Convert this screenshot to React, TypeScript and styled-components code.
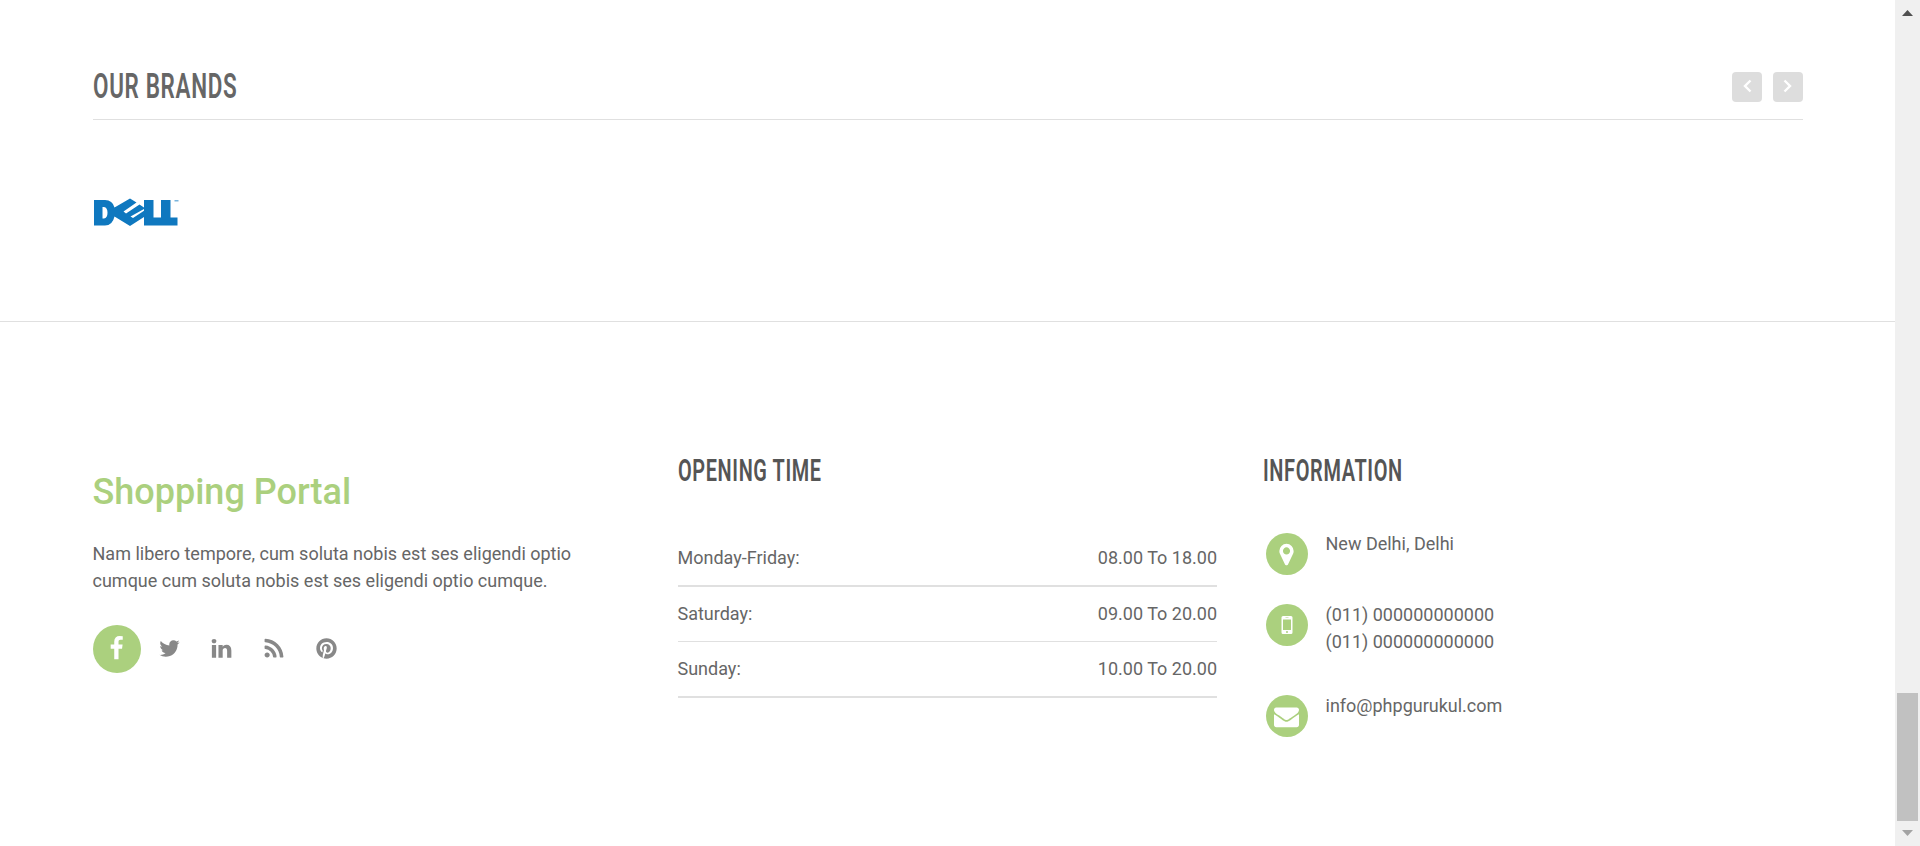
import React from 'react';
import styled, { createGlobalStyle } from 'styled-components';
import { FaPinterest } from 'react-icons/fa';

const GREEN = '#abd07e';
const LINE = '#e0e0e0';

const GlobalStyle = createGlobalStyle`
  * { box-sizing: border-box; }
  html, body { margin: 0; padding: 0; background: #fff; overflow: hidden; }
  body { font: 18px/27px Roboto, sans-serif; color: #666; }
  h2, h3, h4, p, ul { margin: 0; padding: 0; font-weight: 400; }
  ul { list-style: none; }
`;

const Window = styled.div`
  display: flex;
  width: 1920px;
  height: 846px;
`;

const Page = styled.main`
  flex: 1;
  min-width: 0;
`;

const Brands = styled.section`
  height: 322px;
  padding: 72px 92px 0 92.5px;
  border-bottom: 1px solid ${LINE};
`;

const BrandsHeader = styled.header`
  display: flex;
  justify-content: space-between;
  height: 48px;
  border-bottom: 1px solid ${LINE};
`;

const Condensed = styled.h3<{ $size: number; $scale: number; $color: string }>`
  width: max-content;
  height: 30px;
  font-size: ${(p) => p.$size}px;
  line-height: 30px;
  font-weight: 600;
  letter-spacing: 1px;
  color: ${(p) => p.$color};
  text-transform: uppercase;
  white-space: nowrap;
  transform: scaleX(${(p) => p.$scale});
  transform-origin: left center;
`;

const Pager = styled.div`
  display: flex;
  gap: 11px;
`;

const PagerButton = styled.button`
  display: flex;
  justify-content: center;
  width: 30px;
  height: 30px;
  padding: 7px 0 0;
  border: 0;
  border-radius: 4px;
  background: #ddd;
`;

const BrandLogo = styled.svg`
  display: block;
  width: 88px;
  height: 30px;
  margin: 77px 0 0;
`;

const Footer = styled.footer`
  display: grid;
  grid-template-columns: 540px 539.5px 540px;
  column-gap: 45px;
  padding: 133px 0 0 92.5px;
`;

const Column = styled.div<{ $shift?: number }>`
  margin-left: ${(p) => p.$shift ?? 0}px;
`;

const Logo = styled.h2`
  padding-top: 17px;
  font-size: 36px;
  line-height: 40px;
  font-weight: 500;
  color: ${GREEN};
`;

const About = styled.p`
  margin-top: 28px;
  white-space: nowrap;
`;

const Socials = styled.ul`
  display: flex;
  gap: 4.5px;
  margin-top: 31px;
`;

const Social = styled.li<{ $active?: boolean }>`
  display: flex;
  align-items: center;
  justify-content: center;
  width: 48px;
  height: 48px;
  padding-bottom: 1px;
  border-radius: 50%;
  color: ${(p) => (p.$active ? '#fff' : '#888')};
  background: ${(p) => (p.$active ? GREEN : 'transparent')};
`;

const Hours = styled.ul`
  margin-top: 46px;
`;

const HoursRow = styled.li<{ $height: number; $border: number }>`
  display: flex;
  align-items: center;
  justify-content: space-between;
  height: ${(p) => p.$height}px;
  padding-bottom: 2px;
  border-bottom: ${(p) => p.$border}px solid ${LINE};
`;

const Contacts = styled.ul`
  margin-top: 48px;
`;

const Contact = styled.li<{ $height: number }>`
  display: flex;
  gap: 18px;
  height: ${(p) => p.$height}px;
  padding-left: 3px;
`;

const Badge = styled.span`
  display: flex;
  align-items: center;
  justify-content: center;
  width: 42px;
  height: 42px;
  border-radius: 50%;
  background: ${GREEN};
  color: #fff;
`;

const ContactText = styled.div`
  margin-top: -3px;
`;

const Scrollbar = styled.aside`
  display: flex;
  flex-direction: column;
  align-items: center;
  width: 25px;
  height: 846px;
  padding: 10px 0;
  background: #f0f0f0;
`;

const ScrollThumb = styled.div`
  width: 21px;
  height: 128px;
  margin: 677px 0 9px;
  background: #c1c1c1;
`;

const paths = {
  facebook:
    'M1343 12v264h-157q-86 0-116 36t-30 108v189h293l-39 296h-254v759h-306v-759h-255v-296h255v-218q0-186 104-288.5t277-102.5q147 0 228 12z',
  twitter:
    'M1684 408q-67 98-162 167 1 14 1 42 0 130-38 259.5t-115.5 248.5-184.5 210.5-258 146-323 54.5q-271 0-496-145 35 4 78 4 225 0 401-138-105-2-188-64.5t-114-159.5q33 5 61 5 43 0 85-11-112-23-185.5-111.5t-73.5-205.5v-4q68 38 146 41-66-44-105-115t-39-154q0-88 44-163 121 149 294.5 238.5t371.5 99.5q-8-38-8-74 0-134 94.5-228.5t228.5-94.5q140 0 236 102 109-21 205-78-37 115-142 178 93-10 186-50z',
  linkedin:
    'M477 625v991h-330v-991h330zm21-306q1 73-50.5 122t-135.5 49h-2q-82 0-132-49t-50-122q0-74 51.5-122.5t134.5-48.5 133 48.5 51 122.5zm1166 729v568h-329v-530q0-105-40.5-164.5t-126.5-59.5q-63 0-105.5 34.5t-63.5 85.5q-11 30-11 81v553h-329q2-399 2-647t-1-296l-1-48h329v144h-2q20-32 41-56t56.5-52 87-43.5 114.5-15.5q171 0 275 113.5t104 332.5z',
  rss:
    'M576 1344q0 80-56 136t-136 56-136-56-56-136 56-136 136-56 136 56 56 136zm512 123q2 28-17 48-18 21-47 21h-135q-25 0-43-16.5t-20-41.5q-22-229-184.5-391.5t-391.5-184.5q-25-2-41.5-20t-16.5-43v-135q0-29 21-47 17-17 43-17h5q160 13 306 80.5t259 181.5q114 113 181.5 259t80.5 306zm512 2q2 27-18 47-18 20-46 20h-143q-26 0-44.5-17.5t-19.5-42.5q-12-215-101-408.5t-231.5-336-336-231.5-408.5-102q-25-1-42.5-19.5t-17.5-43.5v-143q0-28 20-46 18-18 44-18h3q262 13 501.5 120t425.5 294q187 186 294 425.5t120 501.5z',
  marker:
    'M1152 640q0-106-75-181t-181-75-181 75-75 181 75 181 181 75 181-75 75-181zm256 0q0 109-33 179l-364 774q-16 33-47.5 52t-67.5 19-67.5-19-46.5-52l-365-774q-33-70-33-179 0-212 150-362t362-150 362 150 150 362z',
  envelope:
    'M1792 710v794q0 66-47 113t-113 47h-1472q-66 0-113-47t-47-113v-794q44 49 101 87 362 246 497 345 57 42 92.5 65.5t94.5 48 110 24.5h2q51 0 110-24.5t94.5-48 92.5-65.5q170-123 498-345 57-39 100-87zm0-294q0 79-49 151t-122 123q-376 261-468 325-10 7-42.5 31t-54 38.5-52 32.5-57.5 27-50 9h-2q-23 0-50-9t-57.5-27-52-32.5-54-38.5-42.5-31q-91-64-262-182.5t-205-142.5q-62-42-117-115.5t-55-136.5q0-78 41.5-130t118.5-52h1472q65 0 112.5 47t47.5 113z',
};

const Icon = ({ name, size }: { name: keyof typeof paths; size: number }) => (
  <svg width={size} height={size} viewBox="0 0 1792 1792" fill="currentColor">
    <path d={paths[name]} />
  </svg>
);

const Chevron = ({ d }: { d: string }) => (
  <svg width="12" height="14" viewBox="0 0 12 14" fill="none" stroke="#fff" strokeWidth="2.4">
    <path d={d} />
  </svg>
);

const hours = [
  { day: 'Monday-Friday:', time: '08.00 To 18.00', height: 56, border: 2 },
  { day: 'Saturday:', time: '09.00 To 20.00', height: 55, border: 1 },
  { day: 'Sunday:', time: '10.00 To 20.00', height: 56, border: 2 },
];

export default function App() {
  return (
    <Window>
      <GlobalStyle />
      <Page>
        <Brands>
          <BrandsHeader>
            <Condensed $size={35} $scale={0.642} $color="#666">Our Brands</Condensed>
            <Pager>
              <PagerButton aria-label="Previous"><Chevron d="M9.500 1.500L4 7L9.500 12.500" /></PagerButton>
              <PagerButton aria-label="Next"><Chevron d="M2.500 1.500L8 7L2.500 12.500" /></PagerButton>
            </Pager>
          </BrandsHeader>
          <BrandLogo viewBox="0 0 88 30" fill="#0f78bf" role="img" aria-label="Dell">
            <path fillRule="evenodd" d="M1 3H12Q19.500 3 21.500 10.500L37 1.500L43.500 5.500L30.500 14.500L33 16.500L46.500 7.500L51 10.500V3H60.500V20.500H68V3H77.500V20.500H84.500V28.500H51V20L37 29L21.500 19.500Q19.500 28.500 12 28.500H1ZM9.500 10V21.500H11Q14.500 21 14.500 15.750Q14.500 10.500 11 10ZM37.500 19.500L40 21L51 13.700V12Z" />
            <path d="M81.500 3H85.500V4.500H81.500Z" opacity=".55" />
          </BrandLogo>
        </Brands>
        <Footer>
          <Column>
            <Logo>Shopping Portal</Logo>
            <About>
              Nam libero tempore, cum soluta nobis est ses eligendi optio
              <br />
              cumque cum soluta nobis est ses eligendi optio cumque.
            </About>
            <Socials>
              <Social $active><Icon name="facebook" size={25} /></Social>
              <Social><Icon name="twitter" size={23} /></Social>
              <Social><Icon name="linkedin" size={23} /></Social>
              <Social><Icon name="rss" size={24} /></Social>
              <Social><FaPinterest size={21} /></Social>
            </Socials>
          </Column>
          <Column>
            <Condensed as="h4" $size={32} $scale={0.622} $color="#555">Opening Time</Condensed>
            <Hours>
              {hours.map((h) => (
                <HoursRow key={h.day} $height={h.height} $border={h.border}>
                  <span>{h.day}</span>
                  <span>{h.time}</span>
                </HoursRow>
              ))}
            </Hours>
          </Column>
          <Column $shift={0.5}>
            <Condensed as="h4" $size={32} $scale={0.624} $color="#555">Information</Condensed>
            <Contacts>
              <Contact $height={71}>
                <Badge><Icon name="marker" size={25} /></Badge>
                <ContactText>New Delhi, Delhi</ContactText>
              </Contact>
              <Contact $height={91}>
                <Badge>
                  <svg width="12" height="18" viewBox="0 0 12 18" fill="#fff">
                    <path fillRule="evenodd" d="M2 0H10Q11.500 0 11.500 1.500V16.500Q11.500 18 10 18H2Q.5 18 .5 16.500V1.500Q.5 0 2 0ZM2 3.500V14H10V3.500ZM4.500 1.500V2H7.500V1.500ZM6 15A1 1 0 1 0 6 17A1 1 0 1 0 6 15Z" />
                  </svg>
                </Badge>
                <ContactText>
                  (011) 000000000000
                  <br />
                  (011) 000000000000
                </ContactText>
              </Contact>
              <Contact $height={42}>
                <Badge><Icon name="envelope" size={25} /></Badge>
                <ContactText>info@phpgurukul.com</ContactText>
              </Contact>
            </Contacts>
          </Column>
        </Footer>
      </Page>
      <Scrollbar>
        <svg width="11" height="6" viewBox="0 0 11 6"><path d="M5.500 0L11 6H0Z" fill="#505050" /></svg>
        <ScrollThumb />
        <svg width="11" height="6" viewBox="0 0 11 6"><path d="M0 0H11L5.500 6Z" fill="#a3a3a3" /></svg>
      </Scrollbar>
    </Window>
  );
}
